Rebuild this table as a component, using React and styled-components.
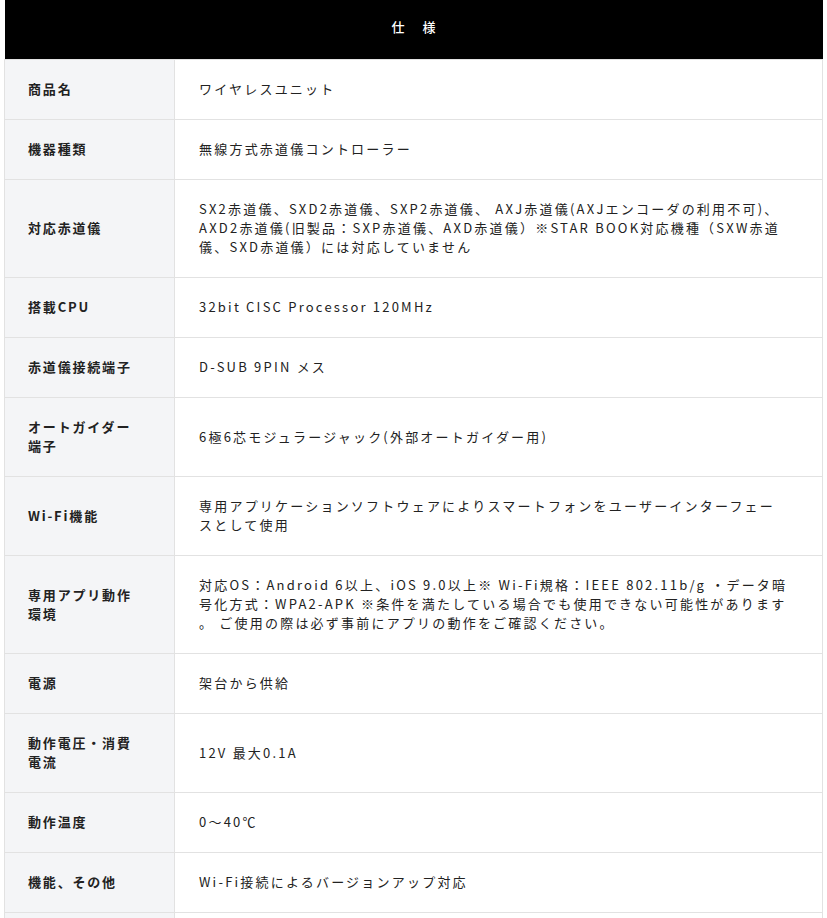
import React from 'react'
import styled, { createGlobalStyle } from 'styled-components'

const specs = [
  ['商品名', 'ワイヤレスユニット'],
  ['機器種類', '無線方式赤道儀コントローラー'],
  ['対応赤道儀', 'SX2赤道儀、SXD2赤道儀、SXP2赤道儀、 AXJ赤道儀(AXJエンコーダの利用不可)、AXD2赤道儀(旧製品：SXP赤道儀、AXD赤道儀）※STAR BOOK対応機種（SXW赤道儀、SXD赤道儀）には対応していません'],
  ['搭載CPU', '32bit CISC Processor 120MHz'],
  ['赤道儀接続端子', 'D-SUB 9PIN メス'],
  ['オートガイダー端子', '6極6芯モジュラージャック(外部オートガイダー用)'],
  ['Wi-Fi機能', '専用アプリケーションソフトウェアによりスマートフォンをユーザーインターフェースとして使用'],
  ['専用アプリ動作環境', '対応OS：Android 6以上、iOS 9.0以上※ Wi-Fi規格：IEEE 802.11b/g ・データ暗号化方式：WPA2-APK ※条件を満たしている場合でも使用できない可能性があります 。 ご使用の際は必ず事前にアプリの動作をご確認ください。'],
  ['電源', '架台から供給'],
  ['動作電圧・消費電流', '12V 最大0.1A'],
  ['動作温度', '0〜40℃'],
  ['機能、その他', 'Wi-Fi接続によるバージョンアップ対応'],
  ['', ''],
]

const Global = createGlobalStyle`
  body {
    margin: 0;
    background: #fff;
    font-family: "Noto Sans CJK JP", "Noto Sans", sans-serif;
    color: #222;
  }
`

const Wrap = styled.div`
  padding: 0 4px;
`

const Table = styled.table`
  width: 100%;
  border-collapse: collapse;
  table-layout: fixed;
`

const LabelCol = styled.col`
  width: 170px;
`

const Head = styled.th`
  background: #000;
  color: #fff;
  height: 53px;
  padding: 0 0 6px;
  font-size: 13px;
  font-weight: 500;
  letter-spacing: 1.4em;
  text-indent: 1.4em;
  text-align: center;
`

const Label = styled.th`
  background: #f4f5f7;
  border: 1px solid #e2e2e2;
  padding: 19px 32px 21px 23px;
  text-align: left;
  font-size: 13px;
  font-weight: 700;
  line-height: 19px;
  letter-spacing: 0.14em;
`

const Value = styled.td`
  border: 1px solid #e2e2e2;
  padding: 19px 34px 21px 24px;
  font-size: 13px;
  font-weight: 400;
  line-height: 19px;
  letter-spacing: 0.17em;
`

export default function App() {
  return (
    <Wrap>
      <Global />
      <Table>
        <colgroup>
          <LabelCol />
          <col />
        </colgroup>
        <thead>
          <tr>
            <Head colSpan={2}>仕様</Head>
          </tr>
        </thead>
        <tbody>
          {specs.map(([k, v], i) => (
            <tr key={i}>
              <Label>{k}</Label>
              <Value>{v}</Value>
            </tr>
          ))}
        </tbody>
      </Table>
    </Wrap>
  )
}
